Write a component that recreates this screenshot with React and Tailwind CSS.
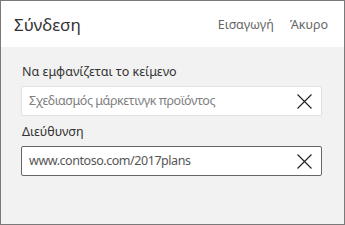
import { useState } from 'react';

// Link dialog: display text + address fields
function ClearIcon() {
    return (
        <svg width="15" height="15" viewBox="0 0 15 15" className="shrink-0">
            <path d="M0.5 0.5 L14.5 14.5 M14.5 0.5 L0.5 14.5" stroke="#1f1f1f" strokeWidth="1.1" fill="none" />
        </svg>
    );
}

function Field({ label, value, placeholder, focused }) {
    const [text, setText] = useState(value || '');
    return (
        <div>
            <div className="text-[12.5px] leading-[16px] text-[#333] mb-[6px] pl-[1px]">{label}</div>
            <div
                className={`flex items-center h-[30px] bg-white pl-[7px] pr-[9px] rounded-[2px] border ${focused ? 'border-[#666]' : 'border-[#e1e1e1]'
                    }`}
            >
                <input
                    value={text}
                    onChange={(e) => setText(e.target.value)}
                    placeholder={placeholder}
                    className="flex-1 min-w-0 bg-transparent outline-none text-[12.5px] tracking-[-0.45px] text-[#555] placeholder:text-[#808080]"
                />
                <ClearIcon />
            </div>
        </div>
    );
}

export default function App() {
    return (
        <div
            className="w-[345px] h-[225px] border border-[#7a7a7a] bg-[#f2f2f2] flex flex-col"
            style={{ fontFamily: '"Segoe UI", "Noto Sans", sans-serif' }}
        >
            {/* Header */}
            <div className="h-[46px] bg-white flex items-center pl-[13px] pr-[16px] pt-[2px]">
                <div className="text-[17px] text-[#333] flex-1">Σύνδεση</div>
                <div className="flex items-center gap-[16px] text-[12.5px] text-[#666]">
                    <span>Εισαγωγή</span>
                    <span>Άκυρο</span>
                </div>
            </div>

            {/* Fields */}
            <div className="pl-[20px] pr-[22px] pt-[17px] space-y-[8px]">
                <Field label="Να εμφανίζεται το κείμενο" placeholder="Σχεδιασμός μάρκετινγκ προϊόντος" />
                <Field label="Διεύθυνση" value="www.contoso.com/2017plans" focused />
            </div>
        </div>
    );
}
